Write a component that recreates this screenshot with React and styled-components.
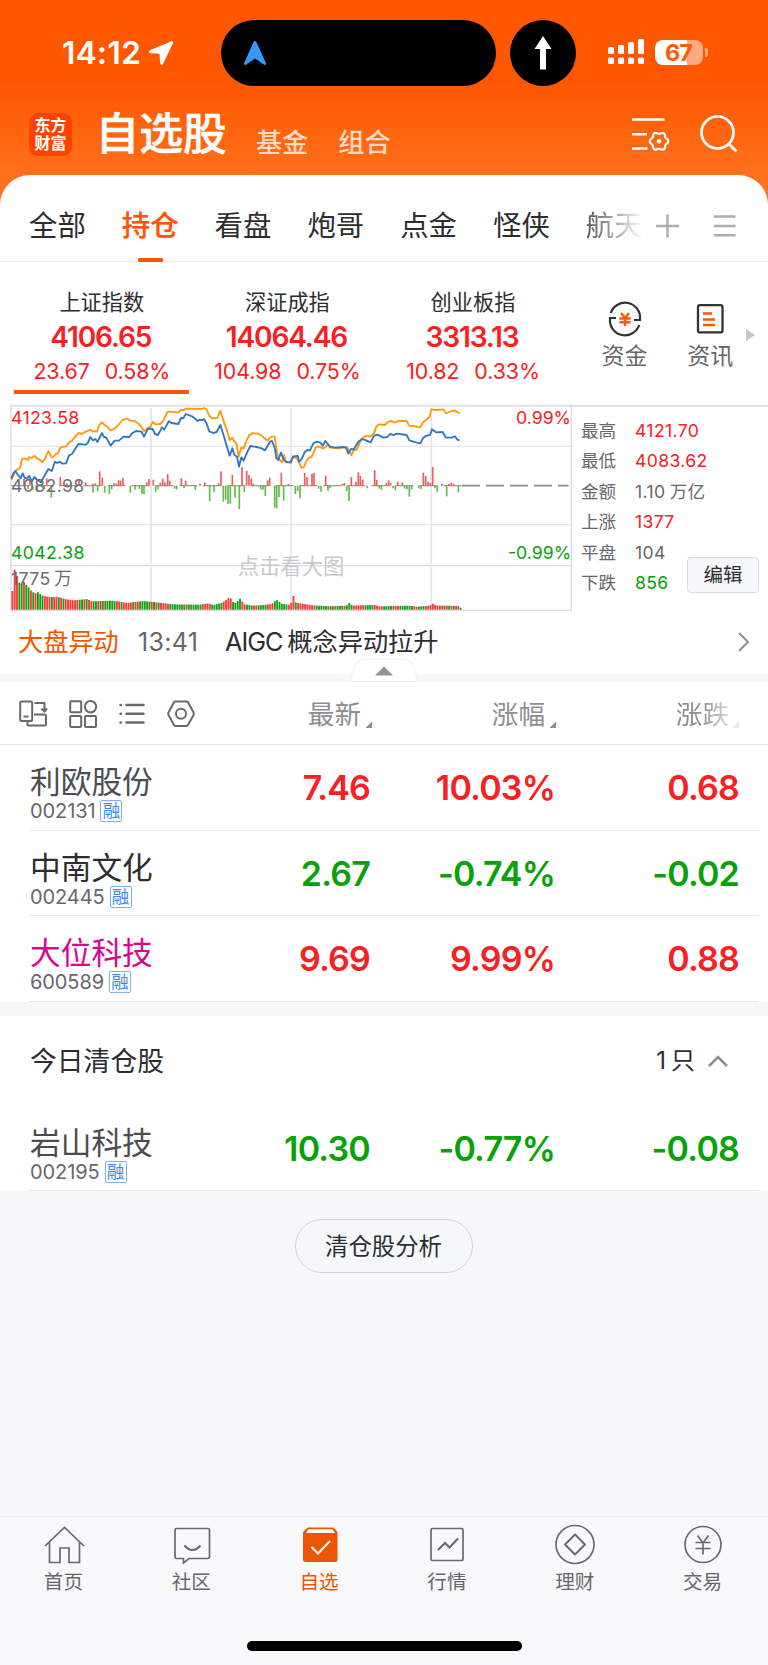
import React from "react";
import styled, { createGlobalStyle } from "styled-components";

const RED = "#f82022";
const GREEN = "#07a208";
const ORANGE = "#ff5500";
const PAGE = "#f6f7fa";

const GlobalStyle = createGlobalStyle`
  * { box-sizing: border-box; }
  body { margin: 0; background: ${PAGE}; }
  svg { display: block; flex: none; overflow: visible; }
`;

const Screen = styled.div`
  width: 768px;
  height: 1665px;
  display: flex;
  flex-direction: column;
  overflow: hidden;
  font-family: Inter, "Noto Sans CJK SC", sans-serif;
  color: #2d2d2f;
  background: linear-gradient(#ff5600 0, #ff5600 78px, #ff6f19 172px, #ff7a2a 215px, ${PAGE} 215px);
`;

/* ---------- status bar ---------- */
const StatusBar = styled.div`
  height: 86px;
  padding-top: 20px;
  display: flex;
  align-items: flex-start;
  color: #fff;
`;
const Clock = styled.div`
  width: 221px;
  height: 66px;
  padding-left: 62px;
  display: flex;
  align-items: center;
  gap: 7px;
  font-size: 31.5px;
  font-weight: 600;
  line-height: 64px;
  letter-spacing: 0.4px;
`;
const Island = styled.div`
  width: 275px;
  height: 66px;
  padding-left: 22px;
  border-radius: 33px;
  background: #000;
  display: flex;
  align-items: center;
`;
const RoundIsland = styled(Island)`
  width: 66px;
  margin-left: 14px;
  padding-left: 0;
  justify-content: center;
`;
const Radio = styled.div`
  height: 64px;
  margin-left: 31.5px;
  display: flex;
  align-items: center;
  gap: 11px;
`;
const Battery = styled.div`
  width: 48px;
  height: 25px;
  border-radius: 8px;
  background: linear-gradient(90deg, #fff 32px, #ffab80 32px);
  color: #ff5a08;
  font-size: 23.5px;
  font-weight: 700;
  line-height: 26px;
  text-align: center;
  letter-spacing: -1px;
`;
const BatteryTip = styled.div`
  width: 3px;
  height: 9px;
  margin-left: -9px;
  border-radius: 0 4px 4px 0;
  background: #ffab80;
`;

/* ---------- title bar ---------- */
const TitleBar = styled.header`
  height: 89px;
  padding: 0 30px 0 29px;
  display: flex;
  align-items: flex-start;
  color: #fff;
`;
const Logo = styled.div`
  width: 43px;
  height: 43px;
  margin-top: 27px;
  border-radius: 9px;
  background: #ff4200;
  text-align: center;
  font-family: Inter, "Noto Sans CJK SC", sans-serif;
  font-size: 16px;
  font-weight: 700;
  padding-top: 3px;
`;
const LogoLine = styled.div`
  height: 18px;
  line-height: 18px;
`;
const Title = styled.h1`
  margin: 16px 0 0 23.5px;
  font-size: 43.8px;
  line-height: 66px;
  font-weight: 500;
  -webkit-text-stroke: 0.5px #fff;
`;
const TitleLink = styled.span`
  margin: 37px 0 0 ${(p) => p.$gap}px;
  font-size: 26.2px;
  line-height: 40px;
  font-weight: 500;
  color: #ffd9c4;
`;
const TitleActions = styled.div`
  margin: 29px 0 0 auto;
  display: flex;
  gap: 30px;
`;

/* ---------- panel and tabs ---------- */
const Panel = styled.main`
  background: #fff;
  border-radius: 30px 30px 0 0;
`;
const Tabs = styled.nav`
  height: 87px;
  border-bottom: 1px solid #ebebed;
  display: flex;
  padding-left: 11px;
`;
const Tab = styled.div`
  width: 92.8px;
  height: 87px;
  display: flex;
  flex-direction: column;
  align-items: center;
  justify-content: flex-end;
  font-size: 28.4px;
  line-height: 40px;
  font-weight: ${(p) => (p.$active ? 500 : 400)};
  color: ${(p) => (p.$active ? ORANGE : "#2d2d2f")};
  ${(p) => p.$active && `-webkit-text-stroke: 0.25px ${ORANGE};`}
  white-space: nowrap;
  ${(p) => p.$fade && "mask-image: linear-gradient(90deg, rgba(0,0,0,.85) 15px, transparent 76px);"}
`;
const TabMark = styled.div`
  width: 25px;
  height: 4px;
  margin-top: 12px;
  border-radius: 1.5px;
  background: ${(p) => (p.$active ? ORANGE : "transparent")};
`;
const TabTools = styled.div`
  display: flex;
  align-items: center;
  gap: 34px;
  height: 102px;
  margin-left: -5px;
`;

/* ---------- indices ---------- */
const Indices = styled.section`
  height: 143px;
  display: flex;
  padding-left: 9px;
`;
const Index = styled.div`
  width: 185.6px;
  display: flex;
  flex-direction: column;
  align-items: center;
  padding-top: 23px;
`;
const IndexName = styled.div`
  margin-bottom: 1px;
  font-size: 21.2px;
  line-height: 34px;
`;
const IndexValue = styled.div`
  padding-right: 2px;
  font-size: 28.1px;
  font-weight: 600;
  line-height: 34px;
  letter-spacing: -1.15px;
  color: ${RED};
`;
const IndexDelta = styled.div`
  display: flex;
  gap: 15px;
  font-size: 21.4px;
  line-height: 34px;
  letter-spacing: -0.1px;
  color: ${RED};
`;
const IndexMark = styled.div`
  width: 175px;
  height: 4px;
  margin-top: 2px;
  background: ${(p) => (p.$active ? ORANGE : "transparent")};
`;
const Shortcuts = styled.div`
  margin-left: 16px;
  display: flex;
`;
const Shortcut = styled.div`
  width: 85.6px;
  padding-top: 41px;
  display: flex;
  flex-direction: column;
  align-items: center;
  gap: 3px;
  font-size: 23px;
  line-height: 36px;
  color: #66666a;
`;
const More = styled.div`
  margin: 67px 0 0 -7px;
`;

/* ---------- chart ---------- */
const Market = styled.section`
  height: 207px;
  padding-left: 10px;
  display: flex;
`;
const Chart = styled.div`
  position: relative;
  width: 562px;
`;
const ChartLabel = styled.span`
  position: absolute;
  ${(p) => (p.$right ? "right: 1px;" : "left: 1px;")}
  top: ${(p) => p.$top}px;
  font-size: 17.7px;
  line-height: 24px;
  letter-spacing: ${(p) => (p.$right ? 0 : 0.35)}px;
  word-spacing: -1.5px;
  color: ${(p) => p.$color};
`;
const Watermark = styled.span`
  position: absolute;
  left: 0;
  right: 0;
  top: 145px;
  text-align: center;
  font-size: 21.3px;
  line-height: 32px;
  color: #c9c9cc;
`;
const Stats = styled.div`
  flex: 1;
  border-top: 2px solid #e0e2e8;
  padding: 9px 9px 0 9px;
  position: relative;
`;
const Stat = styled.div`
  display: flex;
  font-size: 17.6px;
  line-height: 30.4px;
  height: 30.4px;
  color: #67676b;
`;
const StatName = styled.span`
  width: 54px;
`;
const StatValue = styled.span`
  color: ${(p) => p.$color || "#67676b"};
  letter-spacing: 0.35px;
  word-spacing: -1px;
`;
const EditButton = styled.button`
  position: absolute;
  right: 9px;
  top: 150px;
  width: 72px;
  height: 36px;
  padding: 0;
  border: 1px solid #d9dbe0;
  border-radius: 4px;
  background: ${PAGE};
  font: 400 19.5px/33px Inter, "Noto Sans CJK SC", sans-serif;
  color: #2d2d2f;
`;

/* ---------- news ---------- */
const News = styled.section`
  height: 62px;
  padding: 0 19px 0 18px;
  display: flex;
  align-items: flex-start;
  font-size: 25.2px;
  line-height: 60px;
  white-space: nowrap;
`;
const NewsTag = styled.span`
  width: 120px;
  color: #f25500;
`;
const NewsTime = styled.span`
  width: 87px;
  font-size: 25px;
  letter-spacing: 0.3px;
  color: #67676b;
`;
const NewsTitle = styled.span`
  flex: 1;
`;
const Latin = styled.span`
  margin-right: 5px;
  letter-spacing: -1px;
`;
const NewsArrow = styled.span`
  padding-top: 20px;
`;
const Divider = styled.div`
  height: ${(p) => p.$size}px;
  background: ${PAGE};
  position: relative;
`;
const Handle = styled.div`
  position: absolute;
  left: 350px;
  top: -16px;
`;

/* ---------- stock table ---------- */
const columns = "371px 184px 184px";
const TableHead = styled.div`
  height: 63px;
  padding-top: 2px;
  border-bottom: 1px solid #e6e7ea;
  display: grid;
  grid-template-columns: ${columns};
`;
const HeadCell = styled.div`
  display: flex;
  align-items: center;
  justify-content: flex-end;
  font-size: 26.6px;
  line-height: 60px;
  color: #8e8e92;
  ${(p) => p.$fade && "mask-image: linear-gradient(90deg, #000 145px, rgba(0,0,0,.2) 180px);"}
`;
const ViewTools = styled.div`
  margin-right: auto;
  padding-left: 19px;
  display: flex;
  align-items: center;
  gap: 22px;
`;
const SortMark = styled.span`
  width: 7px;
  height: 7px;
  margin: 20px -1px 0 4px;
  background: linear-gradient(135deg, transparent 50%, #8b8d98 50%);
`;
const StockRow = styled.div`
  height: ${(p) => p.$height}px;
  margin: 0 9px 0 29px;
  border-bottom: 1px solid #e8e9ec;
  display: grid;
  grid-template-columns: 341px 185px 184px;
`;
const StockId = styled.div`
  grid-row: 1;
  grid-column: 1;
  padding: 16px 0 0 1px;
`;
const StockName = styled.div`
  font-size: 30.7px;
  line-height: 42px;
  color: ${(p) => p.$color || "#2d2d2f"};
`;
const StockCode = styled.div`
  display: flex;
  align-items: center;
  gap: 5px;
  height: 16px;
  font-size: 20px;
  line-height: 16px;
  letter-spacing: -0.1px;
  color: #67676b;
`;
const MarginBadge = styled.span`
  width: 22px;
  height: 22px;
  border: 1.5px solid #7db0f0;
  border-radius: 2px;
  font-size: 17.5px;
  line-height: 20px;
  text-align: center;
  letter-spacing: 0;
  color: #3d8ae8;
`;
const Figure = styled.div`
  grid-row: 1;
  grid-column: ${(p) => p.$col};
  padding-top: 21px;
  text-align: right;
  font-size: 34px;
  font-weight: 600;
  line-height: 44px;
  letter-spacing: -0.8px;
  color: ${(p) => (p.$up ? RED : GREEN)};
`;
const ClearedHead = styled.div`
  height: 90px;
  padding: 0 40px 0 30px;
  display: flex;
  align-items: center;
  font-size: 26.8px;
  line-height: 90px;
  background: #fff;
`;
const ClearedCount = styled.span`
  margin-left: auto;
  margin-right: 13px;
  display: flex;
  gap: 5px;
  font-size: 24px;
`;
const Footer = styled.section`
  flex: 1;
  background: ${PAGE};
  display: flex;
  justify-content: center;
  align-items: flex-start;
  padding-top: 28px;
`;
const AnalysisButton = styled.button`
  width: 178px;
  height: 54px;
  margin-right: 1px;
  padding: 0;
  border: 1.5px solid #d3d4d8;
  border-radius: 28px;
  background: transparent;
  font: 400 23.4px/51px Inter, "Noto Sans CJK SC", sans-serif;
  color: #2d2d2f;
`;

/* ---------- bottom navigation ---------- */
const BottomNav = styled.nav`
  height: 149px;
  border-top: 1px solid #e8e9ec;
  background: #f9f9fb;
  display: flex;
  flex-direction: column;
  align-items: center;
`;
const NavItems = styled.div`
  width: 768px;
  height: 124px;
  padding-right: 1px;
  display: flex;
`;
const NavItem = styled.div`
  flex: 1;
  padding-top: 9px;
  display: flex;
  flex-direction: column;
  align-items: center;
  gap: 1px;
  font-size: 19.6px;
  line-height: 30px;
  color: ${(p) => (p.$active ? "#ee5500" : "#67676b")};
`;
const NavLabel = styled.span`
  padding-right: 1px;
`;
const HomeBar = styled.div`
  width: 275px;
  height: 10px;
  border-radius: 5px;
  background: #000;
`;

/* Chart geometry is in thirds of a pixel, offset by the plot origin (30, 30). */
const averageLine =
  "34,255 46,228 60,218 66,192 75,190 84,195 88,186 95,189 103,182 112,191 118,193 126,201 134,194 145,168 153,184 160,186 168,177 174,175 181,158 190,155 198,155 206,143 215,138 226,125 235,114 245,117 257,110 272,104 278,110 285,108 291,110 298,90 306,82 314,91 320,93 331,106 345,101 368,75 382,71 391,77 404,78 418,88 432,109 443,99 451,95 459,81 466,88 480,87 490,77 501,53 508,49 535,53 543,44 550,46 557,41 605,42 612,39 619,42 628,63 636,70 652,69 661,47 669,73 681,106 689,136 697,128 703,139 709,145 716,185 724,157 731,160 740,136 748,120 757,115 772,115 784,121 796,132 803,137 808,130 816,125 824,125 829,160 835,190 846,202 852,180 858,202 872,203 877,192 885,185 893,195 900,208 905,219 912,216 919,198 927,188 935,186 947,158 955,154 968,160 976,157 983,148 990,158 1015,160 1030,156 1042,158 1048,170 1054,181 1062,164 1070,165 1078,146 1085,131 1095,124 1102,122 1110,125 1122,115 1129,95 1138,88 1155,90 1165,80 1175,78 1185,83 1195,78 1220,78 1227,92 1240,93 1261,97 1268,83 1278,75 1289,65 1294,43 1310,45 1330,43 1338,55 1355,48 1365,47 1379,55";
const priceLine =
  "34,250 40,235 46,228 54,240 62,250 68,235 75,250 82,249 88,243 95,260 103,246 112,255 123,262 132,245 145,222 155,228 165,200 172,204 180,200 187,206 198,205 207,181 216,177 235,147 258,149 264,143 271,126 279,136 286,132 292,141 306,114 312,126 318,127 332,152 344,137 357,137 370,125 388,126 396,115 408,108 424,110 432,125 444,101 458,102 465,117 474,120 486,97 493,104 506,79 514,84 535,87 543,69 550,70 557,57 578,65 593,78 600,74 606,76 612,72 619,84 628,109 640,114 650,111 661,90 669,115 689,182 697,160 703,180 711,185 717,215 724,187 731,197 740,175 751,153 770,156 785,160 795,166 803,152 810,140 816,138 825,162 829,190 835,195 843,173 852,195 858,200 872,202 879,184 893,183 898,200 905,192 915,170 922,165 930,166 940,145 950,140 960,142 968,152 976,138 990,155 1005,158 1030,156 1038,158 1045,175 1053,162 1062,163 1075,140 1088,132 1100,137 1112,142 1122,122 1132,119 1150,128 1162,126 1170,117 1182,120 1190,116 1220,120 1228,136 1250,143 1261,145 1270,128 1280,122 1290,120 1296,103 1308,112 1328,111 1338,128 1355,128 1365,124 1372,134 1379,136";
const flow = [
  [72,252],[90,256],[140,250],[181,246],[201,265],[237,252],[257,262],[278,266],[286,265],[299,229],[307,248],[342,265],[349,266],[356,256],[362,257],[369,248],[440,262],[447,252],[460,254],[481,263],[488,251],[495,262],[503,237],[509,257],[544,250],[557,257],[600,266],[614,262],[656,265],[663,229],[697,240],[726,217],[740,228],[747,240],[754,250],[760,266],[803,256],[809,248],[844,234],[865,267],[914,234],[921,246],[936,236],[942,234],[977,242],[1027,267],[1033,264],[1054,246],[1068,260],[1075,232],[1081,243],[1088,254],[1124,226],[1130,255],[1159,264],[1166,256],[1172,264],[1193,260],[1207,262],[1270,233],[1277,243],[1284,260],[1291,264],[1298,216],[1326,266],[1347,267],[1354,263],[1361,266],
  [84,282],[98,285],[112,290],[133,282],[154,308],[279,293],[293,289],[314,293],[328,297],[335,283],[391,293],[405,284],[418,282],[426,296],[432,298],[467,290],[474,283],[524,281],[530,283],[552,280],[586,285],[629,318],[642,290],[670,320],[677,314],[684,327],[691,326],[705,308],[718,342],[733,291],[782,283],[789,284],[796,303],[824,338],[830,340],[837,307],[851,317],[886,297],[893,288],[900,310],[956,281],[963,290],[984,288],[990,280],[1040,288],[1047,318],[1102,280],[1138,281],[1144,284],[1179,280],[1186,286],[1214,281],[1221,283],[1228,305],[1235,283],[1256,280],[1263,282],[1305,280],[1312,291],[1340,304],[1375,292],
];
const volumeShape = [
  [37,56],[43,122],[50,104],[57,82],[64,76],[71,84],[78,75],[85,68],[92,58],[105,48],[113,53],[125,43],[145,38],[175,38],[195,32],[220,28],[262,32],[275,25],[330,27],[350,26],[380,20],[430,26],[470,22],[520,16],[600,15],[625,19],[640,14],[665,20],[680,30],[686,36],[692,34],[700,22],[709,20],[719,34],[726,26],[733,16],[760,12],[790,14],[815,17],[830,30],[845,18],[872,14],[879,46],[886,22],[905,18],[940,13],[990,10],[1040,12],[1047,20],[1058,12],[1080,13],[1124,14],[1140,10],[1228,12],[1250,9],[1290,12],[1298,18],[1310,12],[1340,12],[1375,11],[1383,5],
];
const volumeColors =
  "rrrggrggrgrgggrrrgrrgrgrrrrrrggrgrrggrgrgggggrrgrrrrgrrgggggrgrgrrrrgggggggrggggggrrrrgggggrrrrggggrrgggrrggggrrrggggggrrrgrrrrrrrrgggggrggrgggrgggrrrrrggggrrrrggggrrrggggggrrgggrrrrrrrrgrgrgrrggg";

function heightAt(x) {
  for (let i = 1; i < volumeShape.length; i++) {
    const [x0, h0] = volumeShape[i - 1];
    const [x1, h1] = volumeShape[i];
    if (x <= x1) return h0 + ((h1 - h0) * Math.max(0, x - x0)) / (x1 - x0);
  }
  return 5;
}
const volumes = Array.from({ length: 194 }, (_, i) => {
  const x = 37 + i * 6.97;
  return { x, h: heightAt(x), up: volumeColors[i % volumeColors.length] === "r" };
});

function TrendChart() {
  return (
    <svg width="562" height="206" viewBox="30 30 1686 618" fill="none">
      <g stroke="#e3e6ee" strokeWidth="5">
        <path d="M453 38V507M453 516V645M873 38V507M873 516V645M1294 38V507M1294 516V645" />
        <path d="M33 154H1713M33 389H1713" strokeWidth="4" />
        <path d="M30 32H1716" stroke="#dfe1e8" strokeWidth="6" />
        <path d="M33 30V648M1714 30V648M30 512H1714M30 646H1714" stroke="#d9dce3" strokeWidth="4" />
      </g>
      <path d="M34 272H1386" stroke="#999" strokeWidth="4" strokeDasharray="54 18" />
      <path d="M1386 272H1706" stroke="#8b8b8b" strokeWidth="5" strokeDasharray="54 18" />
      {flow.map(([x, y]) => (
        <path key={x} d={`M${x} 272V${y}`} stroke={y < 272 ? "#ee5a5a" : "#62bd48"} strokeWidth="5" />
      ))}
      {volumes.map(({ x, h, up }) => (
        <path key={x} d={`M${x} 644V${644 - h}`} stroke={up ? "#fb3737" : "#12a012"} strokeWidth="5.6" />
      ))}
      <polyline points={averageLine} stroke="#ff9a0a" strokeWidth="5.6" strokeLinejoin="round" />
      <polyline points={priceLine} stroke="#3377c4" strokeWidth="5.6" strokeLinejoin="round" />
    </svg>
  );
}

const LocationIcon = () => (
  <svg width="26" height="26" viewBox="0 0 26 26" fill="#fff">
    <path d="M23.5 1.2 2 10.3c-1.7.8-1.4 2.9.5 3l9 .5.6 9.3c.1 2 2.3 2.4 3.1.6L25 3c.5-1.3-.3-2.2-1.5-1.8z" />
  </svg>
);
const PointerIcon = () => (
  <svg width="24" height="26" viewBox="0 0 24 26" fill="#3399ff">
    <path d="M10.600 2q1.400-2.200 2.800 0l9.500 21q.4 2.400-1.800 1.800L12 18.600 2.900 24.800Q.7 25.400 1.100 23z" />
  </svg>
);
const UpArrowIcon = () => (
  <svg width="18" height="34" viewBox="0 0 18 34" fill="#fff">
    <path d="M9 0l8.500 13H12v20.500H6V13H.5z" />
  </svg>
);
const SignalIcon = () => (
  <svg width="36" height="26" viewBox="0 0 36 26" fill="#fff">
    {[[0, 8], [10, 6], [20, 3], [30, 0]].map(([x, y]) => (
      <React.Fragment key={x}>
        <rect x={x} y={y} width="6" height={15 - y} rx="1.5" />
        <rect x={x} y="18.5" width="6" height="6.5" rx="1.5" />
      </React.Fragment>
    ))}
  </svg>
);
const gearOutline = Array.from({ length: 72 }, (_, i) => {
  const a = (i * Math.PI) / 36;
  const r = 8.4 + 0.9 * Math.cos(6 * a);
  return `${(27 + r * Math.cos(a)).toFixed(2)},${(26.3 + r * Math.sin(a)).toFixed(2)}`;
}).join(" ");
const FilterGearIcon = () => (
  <svg width="38" height="36" viewBox="0 0 38 36" fill="none" stroke="#fff" strokeWidth="2.6">
    <path d="M0 4.500H32.500M0 19.200H15M0 33.500H15.500" />
    <polygon points={gearOutline} strokeWidth="2.2" strokeLinejoin="round" />
    <circle cx="27" cy="26.3" r="2.2" fill="#fff" stroke="none" />
  </svg>
);
const SearchIcon = () => (
  <svg width="38" height="38" viewBox="0 0 38 38" fill="none" stroke="#fff" strokeWidth="2.7">
    <circle cx="17.5" cy="17.5" r="16" />
    <path d="M28.500 28.500 36.500 36.500" />
  </svg>
);
const PlusIcon = () => (
  <svg width="24" height="24" viewBox="0 0 24 24" stroke="#adadb0" strokeWidth="2.4">
    <path d="M0 12H23M11.500 0.500V23.500" />
  </svg>
);
const MenuIcon = () => (
  <svg width="22" height="24" viewBox="0 0 22 24" stroke="#adadb0" strokeWidth="2.4">
    <path d="M0 2.500H21.500M0 12H21.500M0 21.200H21.500" />
  </svg>
);
const FundsIcon = () => (
  <svg width="32" height="32" viewBox="0 0 32 32" fill="none" stroke="#303236" strokeWidth="2.2">
    <path d="M1.800 10A15 15 0 0 1 31 16V17H25M30.200 22A15 15 0 0 1 1 16V15H7" />
    <path d="M12 10 16 15 20 10M10.300 15.500H21.700M10.300 19.300H21.700M16 15V23" stroke="#ff5a08" strokeWidth="2.5" />
  </svg>
);
const ArticleIcon = () => (
  <svg width="28" height="32" viewBox="0 0 28 32" fill="none" stroke="#303236" strokeWidth="2.3">
    <rect x="2" y="2.2" width="24.5" height="27.2" rx="2" />
    <path d="M7 10.500H16M7 16.500H19M7 22H19" stroke="#ff5a08" strokeWidth="2.5" />
  </svg>
);
const SwitchLayoutIcon = () => (
  <svg width="28" height="28" viewBox="0 0 28 28" fill="none" stroke="#69696d" strokeWidth="2">
    <rect x="1.2" y="1.5" width="12" height="19.5" rx="1.5" />
    <path d="M4.500 16.500H9.500M15.500 3H25.500V10M22.500 8.500l3 3 2.500-3M15 14.500H25.500q1.500 0 1.500 1.500V24q0 1.500-1.500 1.500H10q-1.500 0-1.500-1.500V22" />
  </svg>
);
const GridIcon = () => (
  <svg width="28" height="28" viewBox="0 0 28 28" fill="none" stroke="#69696d" strokeWidth="2">
    <rect x="1.2" y="1.2" width="11" height="11" rx="1" />
    <circle cx="21.5" cy="6.7" r="5.7" />
    <rect x="1.2" y="16" width="11" height="11" rx="1" />
    <rect x="16" y="16" width="11" height="11" rx="1" />
  </svg>
);
const ListIcon = () => (
  <svg width="26" height="28" viewBox="0 0 26 28" stroke="#69696d" strokeWidth="2.5" strokeLinecap="round">
    <path d="M7.500 5H24.500M7.500 13.700H24.500M7.500 22.400H24.500M1.500 5h.3M1.500 13.700h.3M1.500 22.400h.3" />
  </svg>
);
const HexIcon = () => (
  <svg width="28" height="28" viewBox="0 0 28 28" fill="none" stroke="#69696d" strokeWidth="2" strokeLinejoin="round">
    <path d="M8.500 1.500H19.500q1 0 1.500.8L26.500 12.500q.7 1.300 0 2.600L21 25q-.5.900-1.500.9H8.500q-1 0-1.500-.9L1.500 15.100q-.7-1.300 0-2.600L7 2.300q.5-.8 1.500-.8z" />
    <circle cx="14" cy="13.7" r="5" />
  </svg>
);

const navIcons = {
  home: <path d="M1 20 20.500 1.500 40 20M5.500 16V36.500H16V22H25V36.500H35.500V16" />,
  chat: (
    <>
      <path d="M4.500 2.500H36q1.500 0 1.500 1.500V31q0 1.500-1.500 1.500H17L11.500 37V32.500H4.500Q3 32.500 3 31V4Q3 2.500 4.500 2.500z" />
      <path d="M12.500 19.500q8 9 16 0" strokeWidth="2" />
    </>
  ),
  picks: (
    <>
      <path d="M8 1.500H33q2.500 1.500 4.500 5V33.500q0 2.500-2.500 2.500H5.500Q3 36 3 33.500V6.500Q5.500 3 8 1.500z" fill="#ee5500" stroke="none" />
      <path d="M8.500 3.200H32.500L35 7H6z" fill="#fff" stroke="none" />
      <path d="M11.500 21 18 27.500 30 15" stroke="#fff" strokeWidth="2" />
    </>
  ),
  quotes: (
    <>
      <rect x="4" y="2.5" width="32" height="32" rx="1.5" />
      <path d="M11 24 18 17 22.500 21.500 31 12.500" strokeWidth="2" />
    </>
  ),
  wealth: (
    <>
      <circle cx="20" cy="18.5" r="19" />
      <path d="M20 8.500 30 18.500 20 28.500 10 18.500z" strokeLinejoin="round" strokeWidth="1.9" />
    </>
  ),
  trade: (
    <>
      <circle cx="20" cy="18.5" r="18" />
      <path d="M14.500 9.500 20 17 25.500 9.500M12.500 16.500H27.500M12.500 22.500H27.500M20 17V28.500" />
    </>
  ),
};

const tabs = ["全部", "持仓", "看盘", "炮哥", "点金", "怪侠", "航天"];
const indices = [
  ["上证指数", "4106.65", "23.67", "0.58%"],
  ["深证成指", "14064.46", "104.98", "0.75%"],
  ["创业板指", "3313.13", "10.82", "0.33%"],
];
const stats = [
  ["最高", "4121.70", RED],
  ["最低", "4083.62", RED],
  ["金额", "1.10 万亿"],
  ["上涨", "1377", RED],
  ["平盘", "104"],
  ["下跌", "856", GREEN],
];
const holdings = [
  { name: "利欧股份", code: "002131", price: "7.46", pct: "10.03%", diff: "0.68", up: true, color: "#4c4c50" },
  { name: "中南文化", code: "002445", price: "2.67", pct: "-0.74%", diff: "-0.02" },
  { name: "大位科技", code: "600589", price: "9.69", pct: "9.99%", diff: "0.88", up: true, color: "#d9068c" },
];
const cleared = { name: "岩山科技", code: "002195", price: "10.30", pct: "-0.77%", diff: "-0.08", color: "#4c4c50" };
const navItems = [
  ["首页", "home"], ["社区", "chat"], ["自选", "picks"], ["行情", "quotes"], ["理财", "wealth"], ["交易", "trade"],
];

function Stock({ stock, height }) {
  return (
    <StockRow $height={height}>
      <StockId>
        <StockName $color={stock.color}>{stock.name}</StockName>
        <StockCode>
          {stock.code}
          <MarginBadge>融</MarginBadge>
        </StockCode>
      </StockId>
      <Figure $col="1" $up={stock.up}>{stock.price}</Figure>
      <Figure $col="2" $up={stock.up}>{stock.pct}</Figure>
      <Figure $col="3" $up={stock.up}>{stock.diff}</Figure>
    </StockRow>
  );
}

export default function App() {
  return (
    <Screen>
      <GlobalStyle />
      <StatusBar>
        <Clock>14:12<LocationIcon /></Clock>
        <Island><PointerIcon /></Island>
        <RoundIsland><UpArrowIcon /></RoundIsland>
        <Radio>
          <SignalIcon />
          <Battery>67</Battery>
          <BatteryTip />
        </Radio>
      </StatusBar>
      <TitleBar>
        <Logo>
          <LogoLine>东方</LogoLine>
          <LogoLine>财富</LogoLine>
        </Logo>
        <Title>自选股</Title>
        <TitleLink $gap={29}>基金</TitleLink>
        <TitleLink $gap={30}>组合</TitleLink>
        <TitleActions><FilterGearIcon /><SearchIcon /></TitleActions>
      </TitleBar>

      <Panel>
        <Tabs>
          {tabs.map((t, i) => (
            <Tab key={t} $active={i === 1} $fade={i === 6}>
              {t}
              <TabMark $active={i === 1} />
            </Tab>
          ))}
          <TabTools><PlusIcon /><MenuIcon /></TabTools>
        </Tabs>

        <Indices>
          {indices.map(([name, value, diff, pct], i) => (
            <Index key={name}>
              <IndexName>{name}</IndexName>
              <IndexValue>{value}</IndexValue>
              <IndexDelta><span>{diff}</span><span>{pct}</span></IndexDelta>
              <IndexMark $active={i === 0} />
            </Index>
          ))}
          <Shortcuts>
            <Shortcut><FundsIcon />资金</Shortcut>
            <Shortcut><ArticleIcon />资讯</Shortcut>
            <More>
              <svg width="9" height="12" viewBox="0 0 9 12" fill="#c6c6c9"><path d="M0 0 9 6 0 12z" /></svg>
            </More>
          </Shortcuts>
        </Indices>

        <Market>
          <Chart>
            <TrendChart />
            <ChartLabel $top={1} $color={RED}>4123.58</ChartLabel>
            <ChartLabel $top={69} $color="#6d6d70">4082.98</ChartLabel>
            <ChartLabel $top={136} $color={GREEN}>4042.38</ChartLabel>
            <ChartLabel $top={162} $color="#6d6d70">1775 万</ChartLabel>
            <ChartLabel $right $top={1} $color={RED}>0.99%</ChartLabel>
            <ChartLabel $right $top={136} $color={GREEN}>-0.99%</ChartLabel>
            <Watermark>点击看大图</Watermark>
          </Chart>
          <Stats>
            {stats.map(([name, value, color]) => (
              <Stat key={name}>
                <StatName>{name}</StatName>
                <StatValue $color={color}>{value}</StatValue>
              </Stat>
            ))}
            <EditButton>编辑</EditButton>
          </Stats>
        </Market>

        <News>
          <NewsTag>大盘异动</NewsTag>
          <NewsTime>13:41</NewsTime>
          <NewsTitle><Latin>AIGC</Latin>概念异动拉升</NewsTitle>
          <NewsArrow>
            <svg width="11" height="20" viewBox="0 0 11 20" fill="none" stroke="#8e8e92" strokeWidth="2"><path d="M1 1 10 10 1 19" /></svg>
          </NewsArrow>
        </News>
        <Divider $size={8}>
          <Handle>
            <svg width="68" height="24" viewBox="0 0 68 24" fill="none">
              <path d="M.5 23.500 4 10Q7 1 16 1H52Q61 1 64 10L67.500 23.500z" fill="#fff" stroke="#eff1f4" strokeWidth="1.2" />
              <path d="M25 17.500 34 8.500 43 17.500z" fill="#949497" />
            </svg>
          </Handle>
        </Divider>

        <TableHead>
          <HeadCell>
            <ViewTools><SwitchLayoutIcon /><GridIcon /><ListIcon /><HexIcon /></ViewTools>
            最新<SortMark />
          </HeadCell>
          <HeadCell>涨幅<SortMark /></HeadCell>
          <HeadCell $fade>涨跌<SortMark /></HeadCell>
        </TableHead>
        {holdings.map((s, i) => <Stock key={s.code} stock={s} height={i === 1 ? 85 : 86} />)}
        <Divider $size={14} />
        <ClearedHead>
          今日清仓股
          <ClearedCount><span>1</span><span>只</span></ClearedCount>
          <svg width="20" height="12" viewBox="0 0 20 12" fill="none" stroke="#8e8e92" strokeWidth="2.6"><path d="M1 11 10 2 19 11" /></svg>
        </ClearedHead>
        <Stock stock={cleared} height={85} />
      </Panel>

      <Footer><AnalysisButton>清仓股分析</AnalysisButton></Footer>
      <BottomNav>
        <NavItems>
          {navItems.map(([label, icon]) => (
            <NavItem key={label} $active={icon === "picks"}>
              <svg width="40" height="40" viewBox="0 0 40 40" fill="none" stroke="#69696d" strokeWidth="1.7">{navIcons[icon]}</svg>
              <NavLabel>{label}</NavLabel>
            </NavItem>
          ))}
        </NavItems>
        <HomeBar />
      </BottomNav>
    </Screen>
  );
}
